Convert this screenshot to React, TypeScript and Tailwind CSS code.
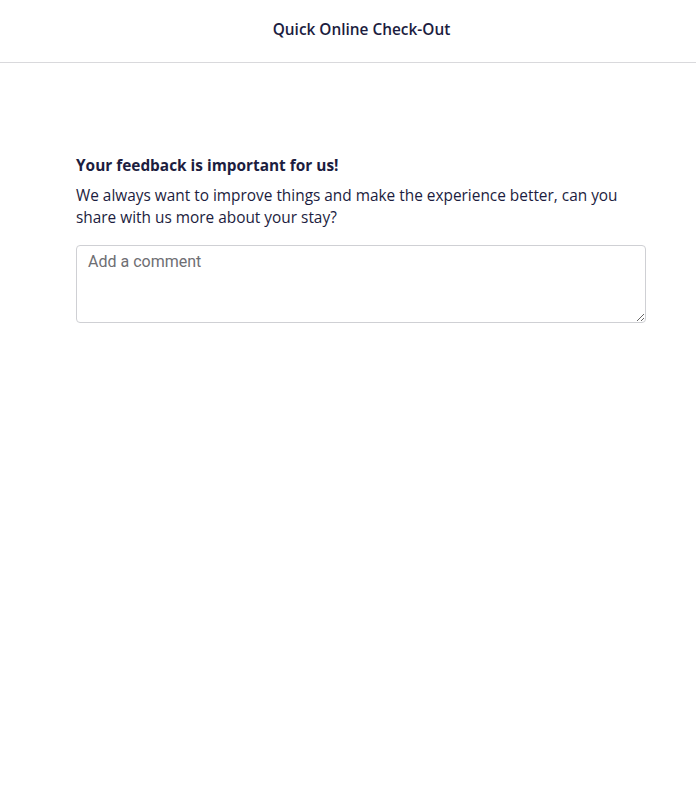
import React from "react";

export default function App() {
  return (
    <div className="min-h-[805px] bg-white">
      <header className="h-[63px] border-b border-[#d9d9dc] flex items-center justify-center pl-[27px]">
        <h1 className="font-['Open_Sans',sans-serif] text-[15.4px] font-semibold text-[#1c1d40] leading-[22px] -mt-[3px]">
          Quick Online Check-Out
        </h1>
      </header>
      <main className="px-[76px] pt-[92px] w-[696px]">
        <h2 className="font-['Open_Sans',sans-serif] text-[15.4px] font-bold text-[#1c1d40] leading-[22px]">
          Your feedback is important for us!
        </h2>
        <p className="mt-[8px] font-['Open_Sans',sans-serif] text-[15.4px] text-[#1c1d40] leading-[22px]">
          We always want to improve things and make the experience better, can you share with us more about your stay?
        </p>
        <textarea
          placeholder="Add a comment"
          className="mt-[16px] block w-[570px] h-[78px] rounded-[4px] border border-[#cfd0d4] px-[11px] py-[6px] font-['Roboto',sans-serif] text-[16px] leading-[19px] text-[#1c1d40] placeholder:text-[#6e6e73] outline-none"
        />
      </main>
    </div>
  );
}
